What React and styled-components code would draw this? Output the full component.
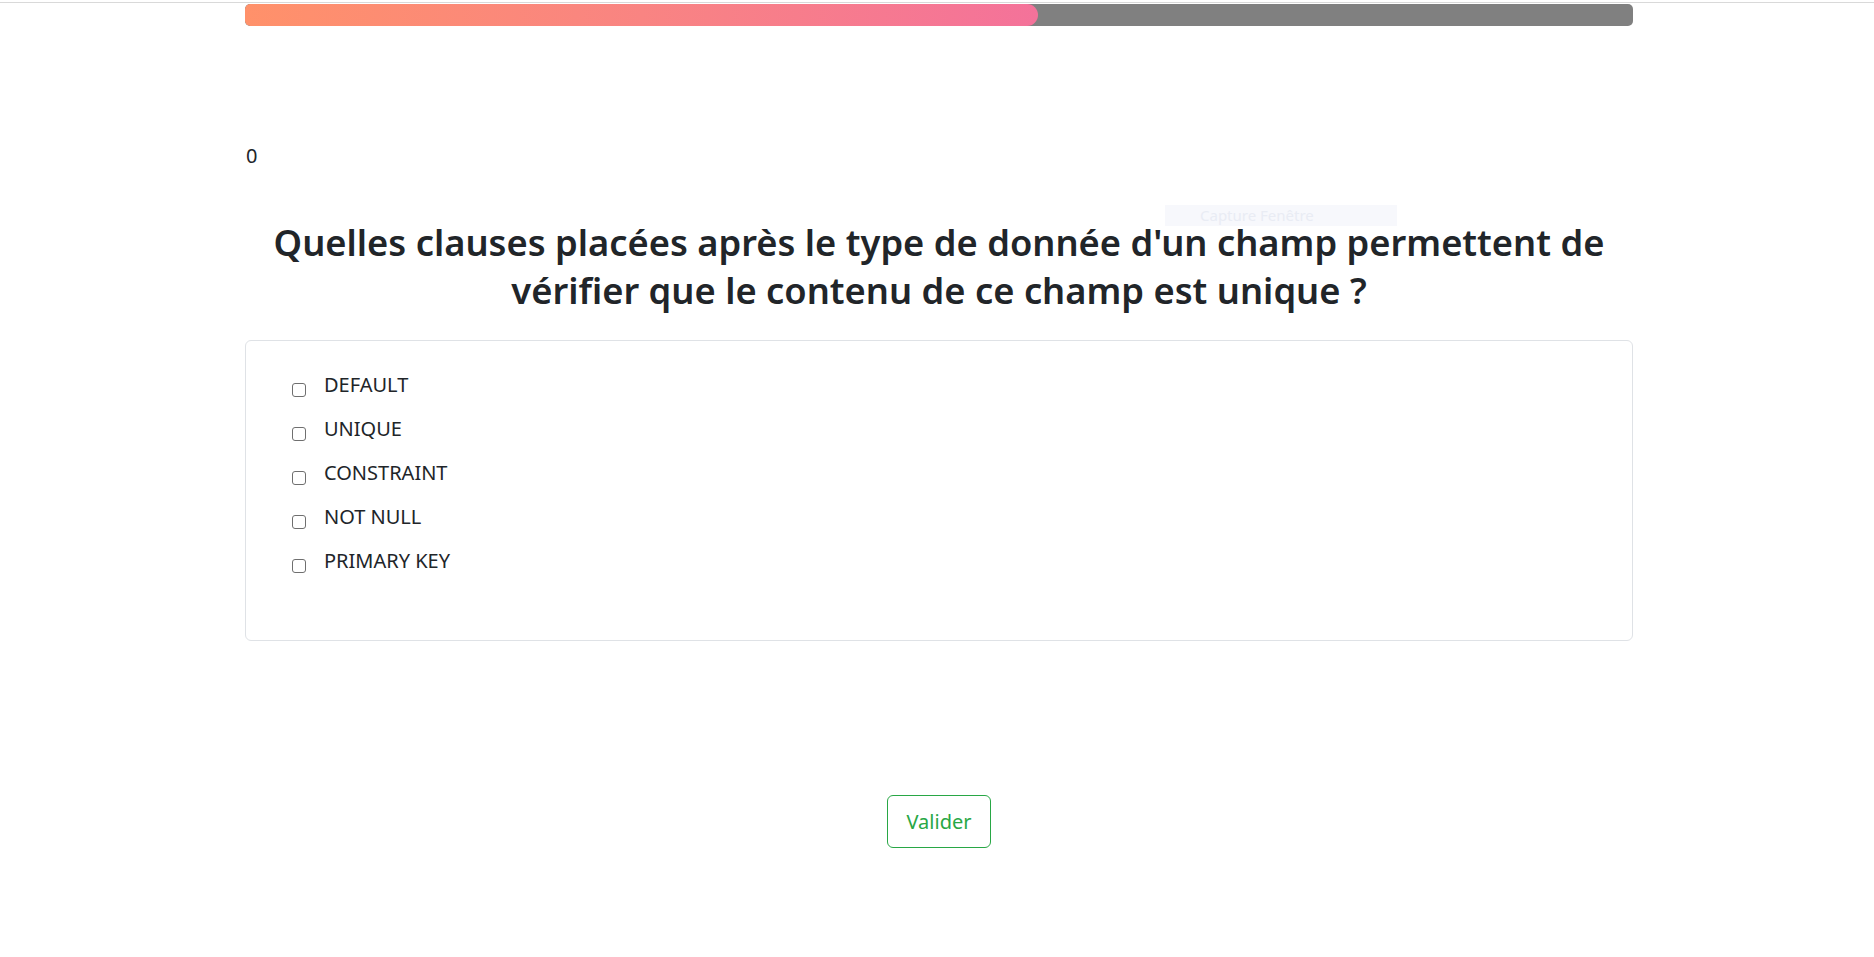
import React from "react";
import styled, { createGlobalStyle } from "styled-components";

const GlobalStyle = createGlobalStyle`
  body {
    margin: 0;
    background: #ffffff;
    font-family: "Noto Sans", "Open Sans", sans-serif;
    color: #212529;
  }
`;

const Page = styled.div`
  padding: 2px 0 0 4px;
  min-height: 955px;
  position: relative;
`;

const TopRule = styled.div`
  border-top: 1px solid #d9d9d9;
  margin-left: -4px;
`;

const Container = styled.div`
  width: 1388px;
  margin: 0 auto;
  display: flex;
  flex-direction: column;
`;

const ProgressTrack = styled.div`
  margin-top: 1px;
  height: 22px;
  background: #808080;
  border-radius: 5px;
  overflow: hidden;
`;

const ProgressFill = styled.div`
  height: 100%;
  border-radius: 5px 11px 11px 5px;
  background: linear-gradient(90deg, #ff916a 0%, #f98482 50%, #f4729a 100%);
`;

const Score = styled.div`
  margin-top: 115px;
  font-size: 20px;
  line-height: 30px;
  padding-left: 1px;
`;

const Question = styled.h1`
  margin: 47px 0 26px;
  font-size: 36.3px;
  line-height: 48px;
  font-weight: 600;
  text-align: center;
  color: #212529;
`;

const Card = styled.div`
  border: 1px solid #dfe2e6;
  border-radius: 6px;
  padding: 29px 46px 64px;
  display: flex;
  flex-direction: column;
  gap: 14px;
`;

const Option = styled.label`
  display: flex;
  align-items: center;
  gap: 18px;
  height: 30px;
  font-size: 20px;
  line-height: 30px;
  color: #212529;
  cursor: pointer;
`;

const Box = styled.input`
  appearance: none;
  width: 14px;
  height: 14px;
  margin: 9px 0 0 0;
  border: 1px solid #6f6f6f;
  border-radius: 3px;
  background: #fff;
  flex-shrink: 0;

  &:checked {
    background: #0075ff;
    border-color: #0075ff;
  }
`;

const Actions = styled.div`
  display: flex;
  justify-content: center;
  margin-top: 154px;
`;

const SubmitButton = styled.button`
  font-family: inherit;
  font-size: 20px;
  line-height: 30px;
  padding: 11px 19px 10px;
  color: #28a745;
  background: #fff;
  border: 1px solid #28a745;
  border-radius: 6px;
  cursor: pointer;
`;

const GhostTip = styled.div`
  position: absolute;
  top: 205px;
  left: 1165px;
  width: 232px;
  height: 21px;
  background: #f7f8fc;
  color: #e9ecf4;
  font-size: 15px;
  line-height: 21px;
  padding-left: 35px;
  box-sizing: border-box;
`;

const options = ["DEFAULT", "UNIQUE", "CONSTRAINT", "NOT NULL", "PRIMARY KEY"];

export default function App() {
  const progress = 57.1;

  return (
    <Page>
      <GlobalStyle />
      <TopRule />
      <Container>
        <ProgressTrack>
          <ProgressFill style={{ width: `${progress}%` }} />
        </ProgressTrack>
        <Score>0</Score>
        <Question>
          Quelles clauses placées après le type de donnée d'un champ permettent de
          vérifier que le contenu de ce champ est unique ?
        </Question>
        <Card>
          {options.map((opt) => (
            <Option key={opt}>
              <Box type="checkbox" />
              {opt}
            </Option>
          ))}
        </Card>
        <Actions>
          <SubmitButton>Valider</SubmitButton>
        </Actions>
      </Container>
      <GhostTip>Capture Fenêtre</GhostTip>
    </Page>
  );
}
